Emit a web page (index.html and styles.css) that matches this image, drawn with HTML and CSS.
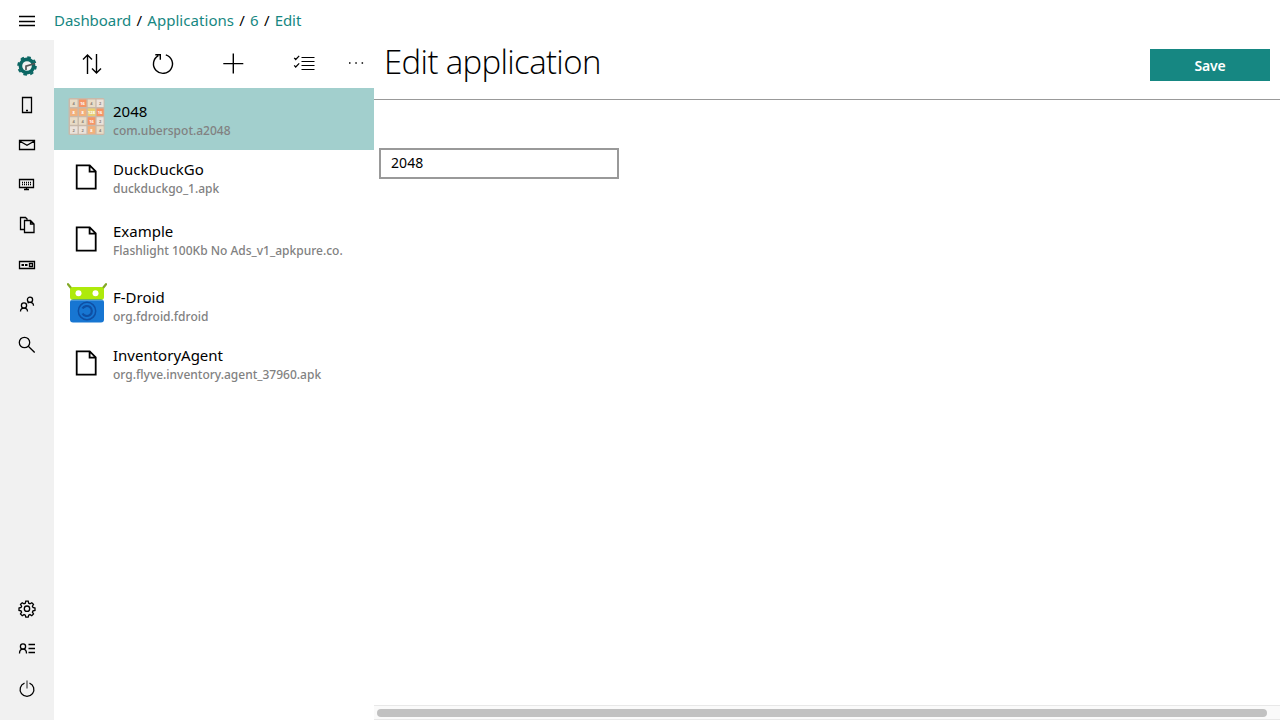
FILE: index.html
```
<!DOCTYPE html>
<html lang="en">
<head>
<meta charset="utf-8">
<title>Edit application</title>
<link rel="stylesheet" href="styles.css">
</head>
<body>
<header class="topbar">
  <button class="menu" aria-label="Menu"><svg class="icon" viewBox="0 0 24 24"><path d="M4 7.500h16M4 12.500h16M4 16.500h16"/></svg></button>
  <nav class="crumbs"><a>Dashboard</a> / <a class="wide">Applications</a> / <a>6</a> / <a>Edit</a></nav>
</header>
<div class="shell">
  <aside class="sidebar">
    <div class="group">
      <span class="item"><svg class="icon" viewBox="0 0 24 24"><circle cx="12" cy="13" r="6.600" stroke="#0b6663" stroke-width="3.600"/><circle cx="12" cy="13" r="8.900" stroke="#0b6663" stroke-width="1.800" stroke-dasharray="3.600 3.390"/><path d="M11 17v-3.800l9-2.700" stroke="#555" stroke-width="1.700"/></svg></span>
      <span class="item"><svg class="icon" viewBox="0 0 24 24"><path d="M7.500 4.500h9v15h-9zM11 17.500h2"/></svg></span>
      <span class="item"><svg class="icon" viewBox="0 0 24 24"><path d="M4.500 7.500h15v9h-15zM4.500 8l7.500 4.200L19.500 8"/></svg></span>
      <span class="item"><svg class="icon" viewBox="0 0 24 24"><path d="M4.500 6.500h14v8h-14zM11.500 14.500v2M9 16.500h5"/><path d="M7 9.500h10M7 11.500h10" stroke-dasharray="1 1"/></svg></span>
      <span class="item"><svg class="icon" viewBox="0 0 24 24"><path d="M9 16.500H5.500v-12h5l2 2M9.500 7.500h6l3.500 3.500v8.500H9.500zM15.500 7.500v3.500H19"/></svg></span>
      <span class="item"><svg class="icon" viewBox="0 0 24 24"><path d="M4.500 8.500h15v7h-15z"/><path d="M6.500 12h2.500M10 12h2.500" stroke-width="2"/><path d="M14.500 10.500h3v3h-3z"/></svg></span>
      <span class="item"><svg class="icon" viewBox="0 0 24 24"><circle cx="9" cy="12.500" r="2.600"/><circle cx="15" cy="6.800" r="2.600"/><path d="M5.500 18.500c0-2 1.500-3.400 3.500-3.400s3.500 1.400 3.500 3.400M12.500 10c.7-.5 1.500-.7 2.500-.7 2 0 3.500 1.300 3.500 3.500"/></svg></span>
      <span class="item"><svg class="icon" viewBox="0 0 24 24"><circle cx="9.500" cy="9.500" r="5.200"/><path d="M13.300 13.300l6.400 6.200"/></svg></span>
    </div>
    <div class="group bottom">
      <span class="item"><svg class="icon" viewBox="0 0 24 24"><circle cx="12" cy="11.700" r="2.700"/><path d="M10.800 4.200h2.400l.5 2 1.300.6 1.800-1.100 1.700 1.700-1.100 1.800.6 1.300 2 .5v2.400l-2 .5-.6 1.300 1.100 1.800-1.700 1.700-1.800-1.100-1.300.6-.5 2h-2.400l-.5-2-1.300-.6-1.800 1.100-1.700-1.700 1.100-1.800-.6-1.300-2-.5v-2.400l2-.5.6-1.300-1.100-1.800L7.200 5.700 9 6.800l1.300-.6z"/></svg></span>
      <span class="item"><svg class="icon" viewBox="0 0 24 24"><circle cx="8" cy="9.500" r="2.600"/><path d="M4.500 16.500c0-2.500 1.500-4.300 3.500-4.300s3.500 1.800 3.500 4.300M13.500 7.500H20M13.500 11.500H20M13.500 15.500H20"/></svg></span>
      <span class="item"><svg class="icon" viewBox="0 0 24 24"><path d="M9.500 6.100a6.900 6.900 0 1 0 5 0"/><path d="M12 3.500v8" stroke="#777" stroke-width="1.700"/></svg></span>
    </div>
  </aside>
  <section class="list">
    <div class="tools">
      <svg class="tool" viewBox="0 0 24 24"><path d="M7.500 22V3M3 7.500L7.500 3 12 7.500M16.500 2v19M12 16.500l4.500 4.500 4.500-4.500"/></svg>
      <svg class="tool" viewBox="0 0 24 24"><path d="M14.800 2.800A9.500 9.500 0 1 1 7.300 3.600M4.300 2.700h5v5"/></svg>
      <svg class="tool" viewBox="0 0 24 24"><path d="M2.300 11.600h20M12.300 1.600v20"/></svg>
      <svg class="tool thin" viewBox="0 0 24 24"><path d="M9.500 5.500H22.500M9.500 9.500H22.500M9.500 13.500H22.500M9.500 17.500H22.500M2.200 5.800l1.500 1.700 3.500-3.700M2.200 13.300l1.500 1.700 3.500-3.700"/></svg>
      <svg class="more" viewBox="0 0 24 24"><path d="M5 11h1.500M11.300 11h1.500M17.600 11h1.500" stroke-width="1.500"/></svg>
    </div>
    <article class="row selected">
      <svg class="pic" viewBox="0 0 40 40"><rect x="1.500" y="1" width="36" height="37" rx="1.500" fill="#c9b9aa"/>
        <g fill="#e9dcc6"><path d="M3 2.500h7.500V10H3zM20.800 2.500h7.500V10h-7.500zM3 20.300h7.500v7.500H3zM11.900 20.300h7.500v7.500h-7.500zM29.600 29.200h7v7.500h-7z"/></g>
        <g fill="#ece2da"><path d="M29.600 2.500h7V10h-7zM29.600 20.300h7v7.500h-7zM3 29.200h7.500v7.500H3zM11.900 29.200h7.500v7.500h-7.500z"/></g>
        <path fill="#f69565" d="M11.900 2.500h7.500V10h-7.500zM29.600 11.400h7v7.500h-7zM20.800 20.300h7.500v7.500h-7.500z"/>
        <path fill="#f2b07b" d="M3 11.400h7.500v7.500H3zM11.900 11.400h7.500v7.500h-7.500zM20.800 29.200h7.500v7.500h-7.500z"/>
        <path fill="#ead071" d="M20.800 11.400h7.500v7.500h-7.500z"/>
        <g class="tile dark"><text x="6.700" y="8">4</text><text x="24.500" y="8">4</text><text x="33.100" y="8">2</text><text x="6.700" y="25.800">4</text><text x="15.600" y="25.800">4</text><text x="33.100" y="25.800">2</text><text x="6.700" y="34.700">2</text><text x="15.600" y="34.700">2</text><text x="33.100" y="34.700">4</text></g>
        <g class="tile light"><text x="15.600" y="8">16</text><text x="6.700" y="16.900">8</text><text x="15.600" y="16.900">8</text><text x="24.500" y="16.900">128</text><text x="33.100" y="16.900">16</text><text x="24.500" y="25.800">16</text><text x="24.500" y="34.700">8</text></g>
      </svg>
      <div class="info"><h2>2048</h2><p>com.uberspot.a2048</p></div>
    </article>
    <article class="row"><svg class="file" viewBox="0 0 40 40"><path d="M9.700 8.400h13l6 6v17.200h-19zM22.600 8.400v6.300h6.300"/></svg>
      <div class="info"><h2>DuckDuckGo</h2><p>duckduckgo_1.apk</p></div></article>
    <article class="row"><svg class="file" viewBox="0 0 40 40"><path d="M9.700 8.400h13l6 6v17.200h-19zM22.600 8.400v6.300h6.300"/></svg>
      <div class="info"><h2>Example</h2><p>Flashlight 100Kb No Ads_v1_apkpure.co.</p></div></article>
    <article class="row with-pic">
      <svg class="pic" viewBox="0 0 40 40"><path d="M1 1.200l4 5M39 1.200l-4 5" stroke="#83a927" stroke-width="2.200" stroke-linecap="round"/><rect x="3" y="4" width="34" height="13" rx="3" fill="#aeea0b"/><circle cx="11.500" cy="10.300" r="3" fill="#fff"/><circle cx="28.500" cy="10.300" r="3" fill="#fff"/><rect x="3" y="16.500" width="34" height="23" rx="3" fill="#1776d2"/><rect x="4" y="17" width="32" height="1" fill="#4b99dd"/><circle cx="20" cy="28" r="8.700" fill="none" stroke="#0e4fa4" stroke-width="1.500"/><path d="M15.500 25.500a5 5 0 1 1 0 5" fill="none" stroke="#0e4fa4" stroke-width="2.200"/></svg>
      <div class="info"><h2>F-Droid</h2><p>org.fdroid.fdroid</p></div>
    </article>
    <article class="row"><svg class="file" viewBox="0 0 40 40"><path d="M9.700 8.400h13l6 6v17.200h-19zM22.600 8.400v6.300h6.300"/></svg>
      <div class="info"><h2>InventoryAgent</h2><p>org.flyve.inventory.agent_37960.apk</p></div></article>
  </section>
  <main class="content">
    <div class="head"><h1 class="title">Edit application</h1><button class="save">Save</button></div>
    <div class="form"><input class="field" type="text" value="2048"></div>
    <div class="scroll"><div class="thumb"></div></div>
  </main>
</div>
</body>
</html>
```
FILE: styles.css
```
* { box-sizing: border-box; }
body { margin: 0; width: 1280px; height: 720px; overflow: hidden; display: flex; flex-direction: column; background: #fff; color: #000; font-family: "Noto Sans", "Open Sans", sans-serif; font-size: 15px; }
h1, h2, p { margin: 0; font-weight: 400; white-space: nowrap; }
button { border: 0; padding: 0; background: none; font-family: inherit; }
svg { display: block; flex: none; }
.topbar { height: 40px; display: flex; }
.menu { width: 54px; display: flex; justify-content: center; padding-top: 9px; }
.icon { width: 24px; height: 24px; fill: none; stroke: #000; stroke-width: 1.3; }
.crumbs { line-height: 40px; letter-spacing: -0.05px; word-spacing: 1.4px; white-space: pre; }
.crumbs a { color: #168782; }
.crumbs .wide { letter-spacing: 0.05px; }
.shell { flex: 1; min-height: 0; display: flex; }
.sidebar { width: 54px; background: #f1f1f1; display: flex; flex-direction: column; justify-content: space-between; padding: 5px 0 11px; }
.item { height: 40px; display: flex; align-items: center; justify-content: center; }
.list { width: 320px; }
.tools { height: 48px; display: flex; padding: 12px 0 0 26px; }
.tool, .more { width: 24px; height: 24px; fill: none; stroke: #000; stroke-width: 1.4; margin-right: 46.6px; }
.thin { stroke-width: 1.2; }
.more { margin: 0 0 0 -18px; }
.row { height: 62px; display: flex; padding: 7px 0 0 13px; }
.selected { background: #a2cfcd; }
.row.selected, .row.with-pic { padding-top: 9px; }
.pic { width: 40px; height: 40px; }
.file { width: 40px; height: 40px; fill: none; stroke: #000; stroke-width: 1.8; }
.info { padding: 2px 0 0 6px; }
.selected .info, .with-pic .info { padding-top: 4px; }
h2 { font-size: 15px; line-height: 20px; }
.info p { color: #818181; font-size: 12px; font-weight: 500; line-height: 20px; }
.tile { font: bold 4px "Noto Sans", sans-serif; text-anchor: middle; }
.dark { fill: #8d8279; }
.light { fill: #fff; }
.content { flex: 1; display: flex; flex-direction: column; min-width: 0; }
.head { height: 60px; border-bottom: 1px solid #999; display: flex; justify-content: space-between; padding: 0 10px; }
.title { font: 300 33px/44px "Open Sans", "Noto Sans", sans-serif; letter-spacing: -0.65px; }
.save { width: 120px; height: 32px; margin-top: 9px; background: #168782; color: #fff; font-size: 14px; font-weight: 600; letter-spacing: -0.2px; }
.form { flex: 1; padding: 48px 5px; }
.field { display: block; width: 240px; height: 31px; border: 2px solid #999; padding: 0 10px 2px; font: 14px "Noto Sans", sans-serif; letter-spacing: 0.1px; outline: 0; }
.scroll { height: 15px; border: 1px solid #e8e8e8; border-width: 1px 0; background: #fafafa; padding: 3px 13px 0 3px; }
.thumb { height: 8px; border-radius: 4px; background: #c1c1c1; }
```
